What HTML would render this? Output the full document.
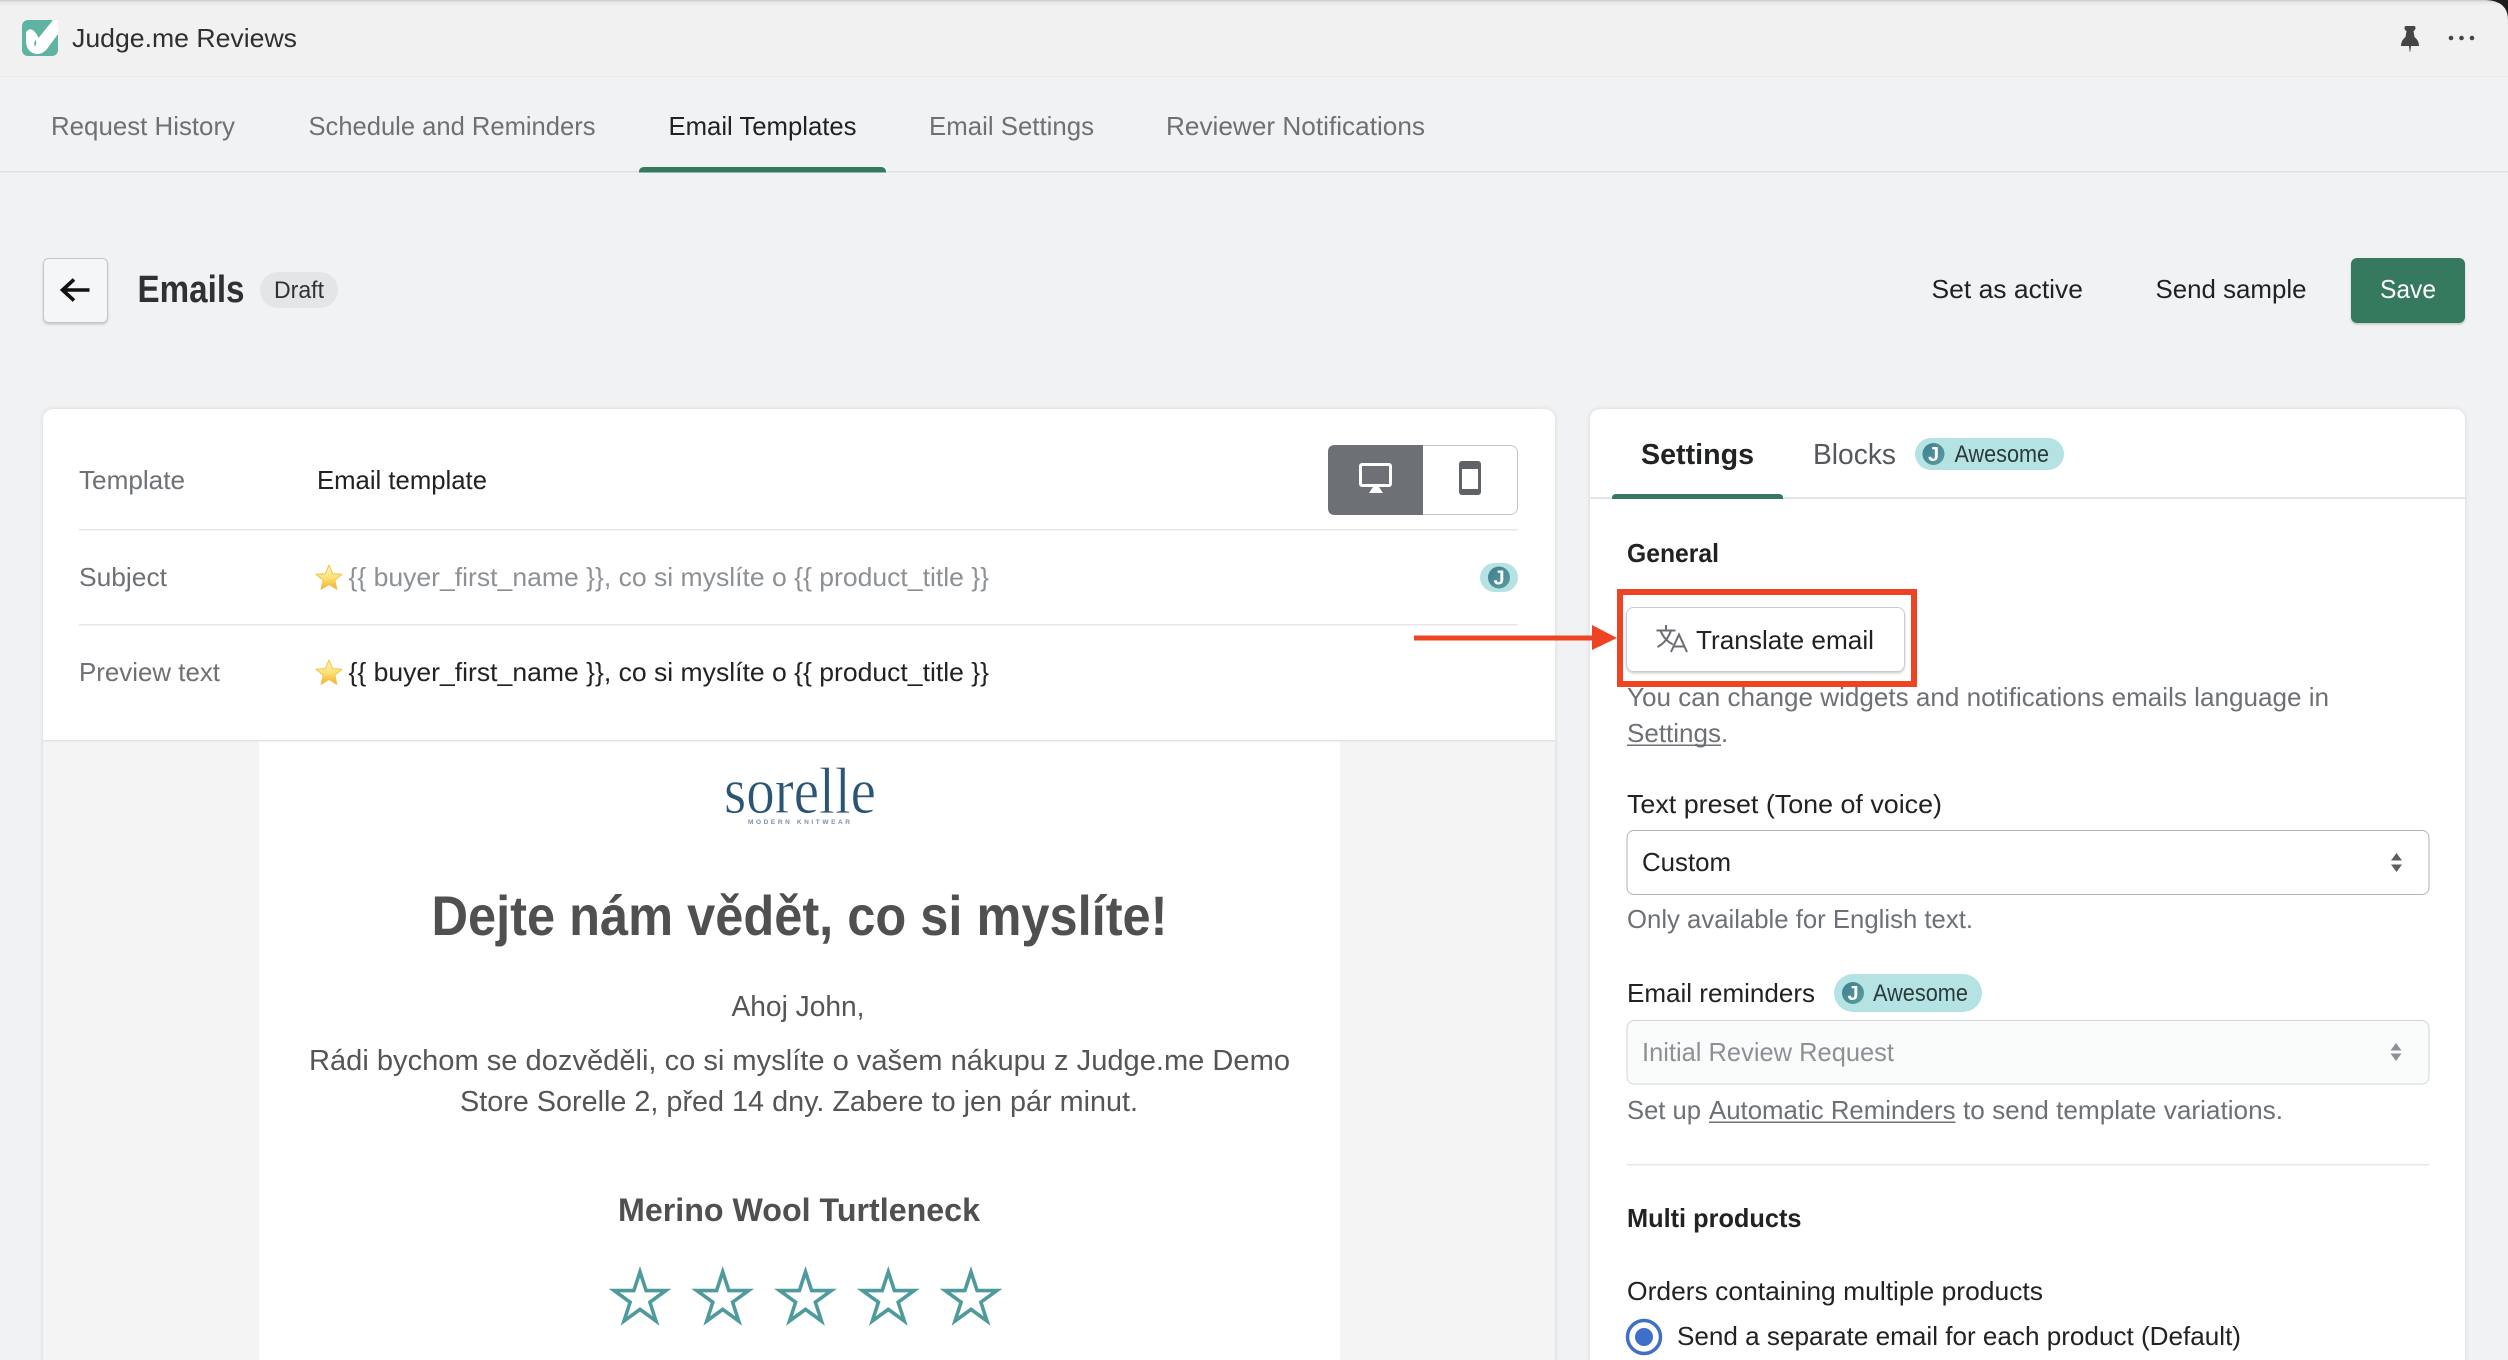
<!DOCTYPE html>
<html lang="en">
<head>
<meta charset="utf-8">
<title>Judge.me Reviews - Emails</title>
<style>
html,body{margin:0;padding:0;background:#f1f2f4;width:2508px;height:1360px;overflow:hidden}
svg{display:block}
text{font-family:"Liberation Sans",sans-serif;font-size:26px;fill:#202223;white-space:pre}
.g{fill:#6d7175}
.b{font-weight:700}
.e{fill:#555;font-size:28.5px}
.s{font-size:24px;fill:#2c3a3c}
.j{font-size:20px;font-weight:700;fill:#fff;text-anchor:middle}
</style>
</head>
<body>
<svg xmlns="http://www.w3.org/2000/svg" width="2508" height="1360" viewBox="0 0 2508 1360">
<defs>
<filter id="sh" x="-2%" y="-2%" width="104%" height="104%"><feDropShadow dx="0" dy="0" stdDeviation="2.5" flood-color="#000" flood-opacity=".13"/></filter>
<filter id="bs" x="-10%" y="-10%" width="120%" height="130%"><feDropShadow dx="0" dy="1.5" stdDeviation="1" flood-color="#000" flood-opacity=".18"/></filter>
<linearGradient id="ye" x1="0" y1="0" x2="0" y2="1"><stop offset="0" stop-color="#fff6c4"/><stop offset=".55" stop-color="#fde070"/><stop offset="1" stop-color="#f3ac35"/></linearGradient>
<linearGradient id="jg" x1="0" y1="0" x2="1" y2="1"><stop offset="0" stop-color="#3f7f90"/><stop offset="1" stop-color="#5b9b9e"/></linearGradient>
<polygon id="st" points="0,-27.2 6.11,-8.41 25.87,-8.41 9.89,3.21 15.99,22 0,10.4 -15.99,22 -9.89,3.21 -25.87,-8.41 -6.11,-8.41" fill="#fff" stroke="#4f9a9a" stroke-width="3.600" stroke-miterlimit="10"/>
<polygon id="em" points="0,-13 3.6,-4.4 13,-3.8 5.8,2.2 8,11.4 0,6.4 -8,11.4 -5.8,2.2 -13,-3.8 -3.6,-4.4" fill="url(#ye)" stroke="#f4c24a" stroke-width="1" stroke-linejoin="round"/>
</defs>

<!-- page -->
<rect width="2508" height="1360" fill="#f1f2f4"/>
<!-- top bar -->
<rect width="2508" height="76" fill="#f1f1f1"/>
<rect width="2508" height="1.5" fill="#cfcfcf"/>
<rect y="1.5" width="2508" height="3" fill="#e9e9e9"/>
<rect y="76" width="2508" height="1" fill="#e9e9ea"/>
<path d="M2486 0Q2508 1 2508 20V0Z" fill="#1d1d1d"/>
<!-- logo -->
<rect x="22" y="20" width="36" height="36" rx="6" fill="#5fb3a2"/>
<path d="M26 32Q30 27 34 31Q37 34 38.500 38L53 20H58V34L47 49Q43 54 37 54Q27 53 26 42Z" fill="#fff"/>
<path d="M36 40Q33 42 35 47Q37 43 36 40Z" fill="#5fb3a2"/>
<text x="72" y="47" textLength="225" lengthAdjust="spacingAndGlyphs" style="fill:#303030">Judge.me Reviews</text>
<!-- pin + dots -->
<path d="M2406 26h8q1.500 0 1.500 2q0 2-2 3l1 6q4 3 4.500 8v1h-8l-.8 6h-.4l-.8-6h-8v-1q.5-5 4.500-8l1-6q-2-1-2-3q0-2 1.500-2z" fill="#454545"/>
<circle cx="2451" cy="38" r="2.300" fill="#454545"/><circle cx="2461.500" cy="38" r="2.300" fill="#454545"/><circle cx="2472" cy="38" r="2.300" fill="#454545"/>

<!-- nav -->
<text class="g" x="51" y="135" textLength="184" lengthAdjust="spacingAndGlyphs">Request History</text>
<text class="g" x="308.500" y="135" textLength="287" lengthAdjust="spacingAndGlyphs">Schedule and Reminders</text>
<text x="668.500" y="135" textLength="188" lengthAdjust="spacingAndGlyphs">Email Templates</text>
<text class="g" x="929" y="135" textLength="165" lengthAdjust="spacingAndGlyphs">Email Settings</text>
<text class="g" x="1166" y="135" textLength="259" lengthAdjust="spacingAndGlyphs">Reviewer Notifications</text>
<rect y="171" width="2508" height="1.500" fill="#dfe1e3"/>
<path d="M639 172.500V171Q640 167 644 167H881Q885 167 886 171V172.500Z" fill="#357a5e"/>

<!-- title row -->
<rect x="43.500" y="258.500" width="64" height="64" rx="5" fill="#f5f6f7" stroke="#c4c6c9" filter="url(#bs)"/>
<path d="M89.500 290H64M74 279.500L62.500 290L74 300.500" fill="none" stroke="#111" stroke-width="3.600"/>
<text class="b" x="137.500" y="302" textLength="107" lengthAdjust="spacingAndGlyphs" style="font-size:38px;fill:#303132">Emails</text>
<rect x="260" y="272" width="78" height="36" rx="18" fill="#e4e5e7"/>
<text x="274" y="298" textLength="50" lengthAdjust="spacingAndGlyphs" style="font-size:24px;fill:#303132">Draft</text>
<text x="1931.500" y="298" textLength="151.500" lengthAdjust="spacingAndGlyphs">Set as active</text>
<text x="2155.500" y="298" textLength="151" lengthAdjust="spacingAndGlyphs">Send sample</text>
<rect x="2351" y="258" width="114" height="65" rx="6" fill="#357a5e" filter="url(#bs)"/>
<text x="2380" y="298" textLength="56" lengthAdjust="spacingAndGlyphs" style="fill:#fff">Save</text>

<!-- left card -->
<path d="M43 1370V421Q43 409 55 409H1543Q1555 409 1555 421V1370Z" fill="#fff" filter="url(#sh)"/>
<text class="g" x="79" y="489" textLength="106" lengthAdjust="spacingAndGlyphs">Template</text>
<text x="317" y="489" textLength="170" lengthAdjust="spacingAndGlyphs">Email template</text>
<rect x="79" y="529" width="1439" height="1.500" fill="#e6e7e9"/>
<text class="g" x="79" y="586" textLength="88" lengthAdjust="spacingAndGlyphs">Subject</text>
<use href="#em" x="329" y="578"/>
<text x="348.500" y="586" textLength="640.500" lengthAdjust="spacingAndGlyphs" style="fill:#8c9196">{{ buyer_first_name }}, co si myslíte o {{ product_title }}</text>
<rect x="79" y="624" width="1439" height="1.500" fill="#e6e7e9"/>
<text class="g" x="79" y="681" textLength="141" lengthAdjust="spacingAndGlyphs">Preview text</text>
<use href="#em" x="329" y="673"/>
<text x="348.500" y="681" textLength="640.500" lengthAdjust="spacingAndGlyphs">{{ buyer_first_name }}, co si myslíte o {{ product_title }}</text>

<!-- device toggle -->
<rect x="1328.500" y="445.500" width="189" height="69" rx="7" fill="#fff" stroke="#c4c6c9"/>
<path d="M1423 445H1335Q1328 445 1328 452V508Q1328 515 1335 515H1423Z" fill="#6d7175"/>
<rect x="1360.500" y="464.500" width="30" height="21" rx="1.500" fill="none" stroke="#fff" stroke-width="3"/>
<path d="M1369 493L1373 487H1379L1383 493Z" fill="#fff"/>
<rect x="1459" y="461" width="22" height="34" rx="3" fill="#5f6367"/>
<rect x="1462" y="469" width="16" height="20" fill="#fff"/>

<!-- J badge subject -->
<rect x="1480" y="563" width="38" height="29" rx="14.500" fill="#b5e3e3"/>
<circle cx="1499" cy="577.500" r="11" fill="url(#jg)"/>
<text class="j" x="1499" y="584.500">J</text>

<!-- email body -->
<rect x="43" y="740" width="1512" height="630" fill="#fff"/>
<rect x="43" y="741" width="216" height="629" fill="#f4f4f4"/>
<rect x="1340" y="741" width="215" height="629" fill="#f4f4f4"/>
<rect x="43" y="740" width="1512" height="1.500" fill="#e3e4e6"/>
<text x="724" y="813" textLength="152" lengthAdjust="spacingAndGlyphs" style="font-family:'Liberation Serif',serif;font-size:66px;fill:#2a5575;stroke:#fff;stroke-width:.7px">sorelle</text>
<text x="748" y="824" textLength="102" lengthAdjust="spacing" style="font-size:6.500px;font-weight:700;fill:#7d90a6">MODERN KNITWEAR</text>
<text class="b" x="431.500" y="935" textLength="736" lengthAdjust="spacingAndGlyphs" style="font-size:56px;fill:#505050">Dejte nám vědět, co si myslíte!</text>
<text class="e" x="731.500" y="1016" textLength="133" lengthAdjust="spacingAndGlyphs">Ahoj John,</text>
<text class="e" x="309" y="1070" textLength="981" lengthAdjust="spacingAndGlyphs">Rádi bychom se dozvěděli, co si myslíte o vašem nákupu z Judge.me Demo</text>
<text class="e" x="460" y="1111" textLength="678" lengthAdjust="spacingAndGlyphs">Store Sorelle 2, před 14 dny. Zabere to jen pár minut.</text>
<text class="b" x="618" y="1221" textLength="362" lengthAdjust="spacingAndGlyphs" style="font-size:32px;fill:#505050">Merino Wool Turtleneck</text>
<use href="#st" x="640" y="1299"/>
<use href="#st" x="722.700" y="1299"/>
<use href="#st" x="805.500" y="1299"/>
<use href="#st" x="888.300" y="1299"/>
<use href="#st" x="971" y="1299"/>

<!-- right card -->
<path d="M1590 1370V421Q1590 409 1602 409H2453Q2465 409 2465 421V1370Z" fill="#fff" filter="url(#sh)"/>
<rect x="1590" y="497" width="875" height="2" fill="#e3e4e6"/>
<path d="M1612 499V498Q1612 494 1616 494H1779Q1783 494 1783 498V499Z" fill="#357a5e"/>
<text class="b" x="1641" y="464" textLength="113" lengthAdjust="spacingAndGlyphs" style="font-size:29px">Settings</text>
<text x="1813" y="464" textLength="83" lengthAdjust="spacingAndGlyphs" style="font-size:29px;fill:#54585c">Blocks</text>
<rect x="1915" y="438" width="149" height="32" rx="16" fill="#b5e3e3"/>
<circle cx="1933.500" cy="454" r="11" fill="url(#jg)"/>
<text class="j" x="1933.500" y="461">J</text>
<text class="s" x="1954.500" y="462" textLength="94.500" lengthAdjust="spacingAndGlyphs">Awesome</text>

<text class="b" x="1627" y="562" textLength="92" lengthAdjust="spacingAndGlyphs">General</text>

<!-- translate button -->
<rect x="1626.500" y="607.500" width="278" height="64" rx="7" fill="#fff" stroke="#c9cccf" filter="url(#bs)"/>
<g fill="none" stroke="#6a6e72" stroke-width="2">
<path d="M1656.500 630.500H1675.500M1666 625V630.500M1671 630.500Q1667 642 1657.500 647M1660.500 630.500Q1664 640 1673 644.500"/>
<path d="M1671 652L1679 634.500L1687 652M1674 646.500H1684"/>
</g>
<text x="1696" y="649" textLength="178" lengthAdjust="spacingAndGlyphs">Translate email</text>
<rect x="1620" y="592" width="294" height="92" fill="none" stroke="#ee4423" stroke-width="6"/>
<rect x="1414" y="635.500" width="180" height="5" fill="#ee4423"/>
<path d="M1592 625L1617 638L1592 650Z" fill="#ee4423"/>

<text class="g" x="1627" y="706" textLength="702" lengthAdjust="spacingAndGlyphs">You can change widgets and notifications emails language in</text>
<text class="g" x="1627" y="742" textLength="94" lengthAdjust="spacingAndGlyphs">Settings</text>
<text class="g" x="1721" y="742">.</text>
<rect x="1627" y="744.500" width="94" height="1.500" fill="#6d7175"/>

<text x="1627" y="813" textLength="315" lengthAdjust="spacingAndGlyphs">Text preset (Tone of voice)</text>
<rect x="1627" y="830.500" width="802" height="64" rx="7" fill="#fff" stroke="#aeb4b9"/>
<text x="1642" y="871" textLength="89" lengthAdjust="spacingAndGlyphs">Custom</text>
<path d="M2396.500 853L2402 860.500H2391Z M2396.500 872L2391 864.500H2402Z" fill="#5c5f62"/>
<text class="g" x="1627" y="928" textLength="346" lengthAdjust="spacingAndGlyphs">Only available for English text.</text>

<text x="1627" y="1002" textLength="188" lengthAdjust="spacingAndGlyphs">Email reminders</text>
<rect x="1834" y="974" width="148" height="38" rx="19" fill="#b5e3e3"/>
<circle cx="1853" cy="993" r="11" fill="url(#jg)"/>
<text class="j" x="1853" y="1000">J</text>
<text class="s" x="1873" y="1001" textLength="95" lengthAdjust="spacingAndGlyphs">Awesome</text>
<rect x="1627" y="1020.500" width="802" height="63.500" rx="7" fill="#fafbfb" stroke="#d2d5d8"/>
<text x="1642" y="1061" textLength="252" lengthAdjust="spacingAndGlyphs" style="fill:#8c9196">Initial Review Request</text>
<path d="M2396 1043L2401.500 1050.500H2390.500Z M2396 1061L2390.500 1053.500H2401.500Z" fill="#8c9196"/>
<text class="g" x="1627" y="1119" textLength="74" lengthAdjust="spacingAndGlyphs">Set up</text>
<text class="g" x="1709" y="1119" textLength="246.500" lengthAdjust="spacingAndGlyphs">Automatic Reminders</text>
<rect x="1709" y="1121.500" width="246.500" height="1.500" fill="#6d7175"/>
<text class="g" x="1963" y="1119" textLength="320" lengthAdjust="spacingAndGlyphs">to send template variations.</text>
<rect x="1627" y="1164" width="802" height="1.500" fill="#e6e7e9"/>
<text class="b" x="1627" y="1227" textLength="174.500" lengthAdjust="spacingAndGlyphs">Multi products</text>
<text x="1627" y="1300" textLength="416" lengthAdjust="spacingAndGlyphs">Orders containing multiple products</text>
<circle cx="1644" cy="1337" r="16.500" fill="#fff" stroke="#3f6fc8" stroke-width="3.500"/>
<circle cx="1644" cy="1337" r="9" fill="#3f6fc8"/>
<text x="1677" y="1345" textLength="564" lengthAdjust="spacingAndGlyphs">Send a separate email for each product (Default)</text>
</svg>
</body>
</html>
